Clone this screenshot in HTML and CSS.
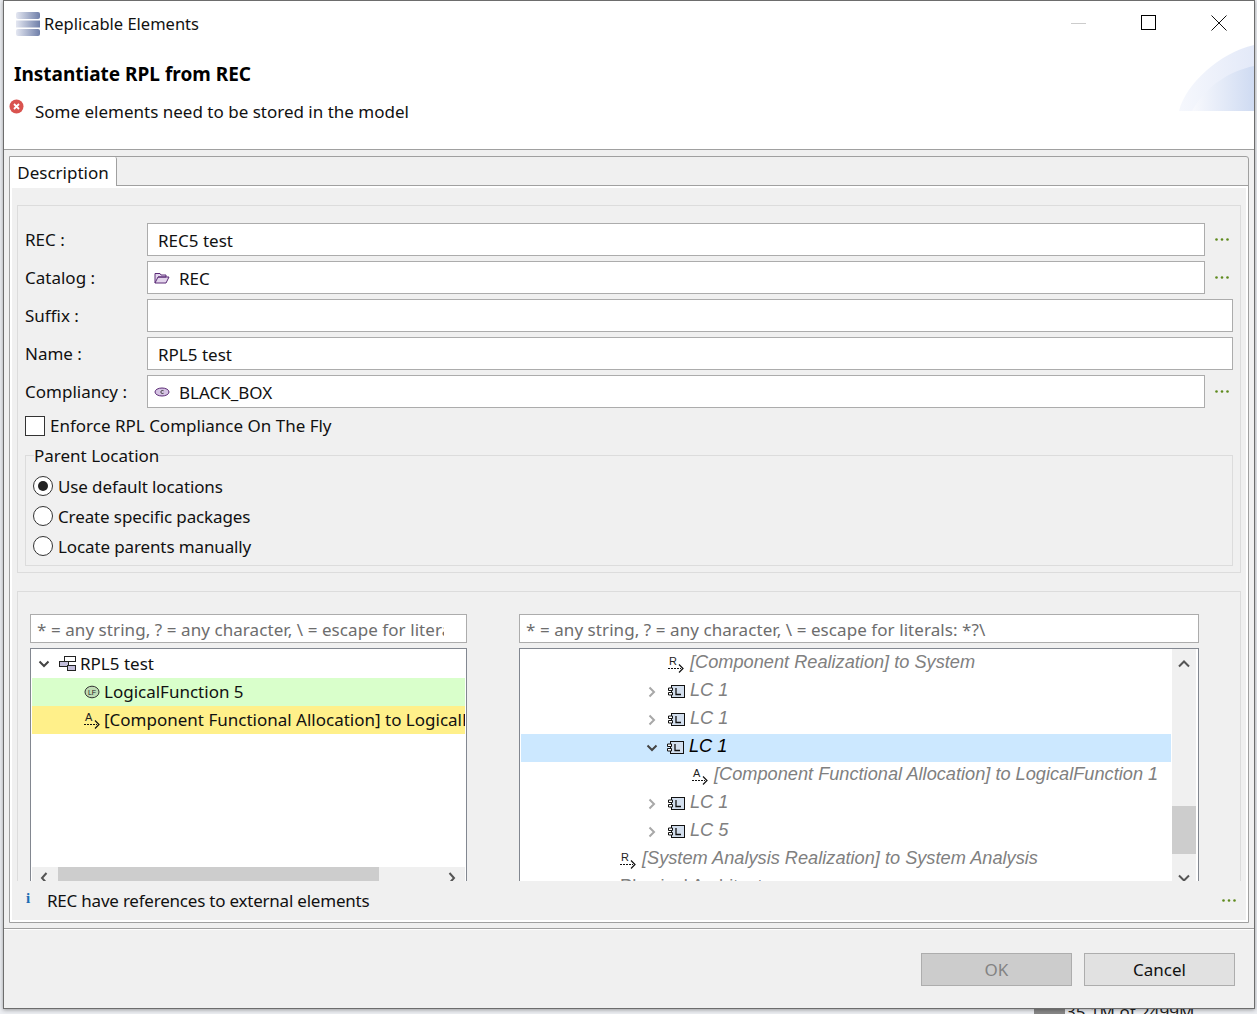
FILE: index.html
```html
<!DOCTYPE html>
<html lang='en'>

<head>
    <meta charset='UTF-8'>
    <meta name='viewport' content='width=device-width, initial-scale=1.0'>
    <title>Replicable Elements</title>
    <link rel="stylesheet" href="styles.css">
</head>

<body>
    <svg class="defs" width="0" height="0">
        <defs>
            <linearGradient id="bar" x1="0" x2="1" y1="0" y2="0">
                <stop offset="0" stop-color="#e4e7f1" />
                <stop offset="1" stop-color="#6f7fa9" />
            </linearGradient>
            <symbol id="lc" viewBox="0 0 17 16">
                <rect x="3.500" y="1.500" width="13" height="12" fill="#d3dfee" stroke="#111" />
                <path d="M0.500 4h4v2.500h-4zM0.500 8.500h4v2.500h-4z" fill="#fff" stroke="#111" />
                <path d="M8 4v6.500h5" fill="none" stroke="#111" stroke-width="1.300" />
            </symbol>
            <symbol id="arrow" viewBox="0 0 16 17">
                <path d="M0 12.500h13" fill="none" stroke="#111" stroke-dasharray="2 1" />
                <path d="M11 8.500l4 4-4 4" fill="none" stroke="#111" stroke-width="1.200" />
            </symbol>
            <symbol id="dots3" viewBox="0 0 14 3">
                <circle cx="1.500" cy="1.500" r="1.300" fill="#5e8a1d" />
                <circle cx="7" cy="1.500" r="1.300" fill="#5e8a1d" />
                <circle cx="12.500" cy="1.500" r="1.300" fill="#5e8a1d" />
            </symbol>
            <symbol id="chev-right" viewBox="0 0 10 12">
                <path d="M2.500 1.500l4.500 4.500-4.500 4.500" fill="none" stroke="#a8a8a8" stroke-width="2" />
            </symbol>
            <symbol id="chev-down" viewBox="0 0 12 10">
                <path d="M1.500 2.500l4.500 4.500 4.500-4.500" fill="none" stroke="#444" stroke-width="2" />
            </symbol>
        </defs>
    </svg>

    <div class="window">
        <div class="titlebar">
            <svg class="app-icon" width="24" height="24" viewBox="0 0 24 24">
                <rect x="0" y="0" width="24" height="7" rx="2" fill="url(#bar)" />
                <rect x="0" y="8.500" width="24" height="7" fill="url(#bar)" />
                <rect x="0" y="17" width="24" height="7" rx="2" fill="url(#bar)" />
            </svg>
            <span class="title-text">Replicable Elements</span>
            <div class="win-controls">
                <svg width="16" height="16" viewBox="0 0 16 16"><path d="M0 8.500h15" stroke="#ccc" /></svg>
                <svg width="16" height="16" viewBox="0 0 16 16"><rect x="0.500" y="0.500" width="14" height="14" fill="none" stroke="#000" /></svg>
                <svg width="16" height="16" viewBox="0 0 16 16"><path d="M0.500 0.500l15 15M15.500 0.500l-15 15" stroke="#111" /></svg>
            </div>
        </div>

        <div class="banner">
            <h1 class="banner-title">Instantiate RPL from REC</h1>
            <div class="banner-msg">
                <svg class="err-icon" width="15" height="15" viewBox="0 0 15 15">
                    <circle cx="7.500" cy="7.500" r="7" fill="#d9534f" />
                    <path d="M5 5l5 5M10 5l-5 5" stroke="#fff" stroke-width="1.800" />
                </svg>
                <span>Some elements need to be stored in the model</span>
            </div>
            <svg class="banner-art" width="75" height="66" viewBox="0 0 75 66">
                <defs>
                    <linearGradient id="art" x1="0" x2="1" y1="0" y2="0">
                        <stop offset="0" stop-color="#f8f9fd" />
                        <stop offset="1" stop-color="#cfdbf2" />
                    </linearGradient>
                    <linearGradient id="art2" x1="0" x2="1" y1="0" y2="0">
                        <stop offset="0" stop-color="#f6f8fd" />
                        <stop offset="1" stop-color="#e3e9f8" />
                    </linearGradient>
                </defs>
                <path d="M0 66C6 40 40 8 75 0V66z" fill="url(#art2)" />
                <path d="M13 66C26 42 50 26 75 21V66z" fill="url(#art)" />
            </svg>
        </div>

        <div class="content">
            <div class="folder">
                <div class="tabbar">
                    <div class="tab">Description</div>
                </div>
                <div class="tab-body">
                    <div class="section form">
                        <div class="row">
                            <label class="lbl">REC :</label>
                            <div class="field">REC5 test</div>
                            <div class="dots"><svg width="14" height="3"><use href="#dots3" /></svg></div>
                        </div>
                        <div class="row">
                            <label class="lbl">Catalog :</label>
                            <div class="field">
                                <svg class="field-icon" width="16" height="14" viewBox="0 0 16 14">
                                    <path d="M1 12V2.500h5l1 1.500h5v2H4L1 12h11l3-6H4" fill="#e3d5ec" stroke="#5b2b76" />
                                </svg>
                                REC
                            </div>
                            <div class="dots"><svg width="14" height="3"><use href="#dots3" /></svg></div>
                        </div>
                        <div class="row">
                            <label class="lbl">Suffix :</label>
                            <div class="field"></div>
                        </div>
                        <div class="row">
                            <label class="lbl">Name :</label>
                            <div class="field">RPL5 test</div>
                        </div>
                        <div class="row">
                            <label class="lbl">Compliancy :</label>
                            <div class="field">
                                <svg class="field-icon" width="16" height="14" viewBox="0 0 16 14">
                                    <ellipse cx="8" cy="7" rx="7" ry="4" fill="#d5c3e3" stroke="#5b2b76" />
                                    <path d="M9.500 5.700a1.800 1.500 0 1 0 0 2.600" fill="none" stroke="#333" />
                                </svg>
                                BLACK_BOX
                            </div>
                            <div class="dots"><svg width="14" height="3"><use href="#dots3" /></svg></div>
                        </div>
                        <div class="check-row">
                            <span class="checkbox"></span>
                            <span class="check-text">Enforce RPL Compliance On The Fly</span>
                        </div>
                        <fieldset class="group">
                            <legend>Parent Location</legend>
                            <div class="radio-row"><span class="radio on"></span>Use default locations</div>
                            <div class="radio-row"><span class="radio"></span>Create specific packages</div>
                            <div class="radio-row"><span class="radio"></span>Locate parents manually</div>
                        </fieldset>
                    </div>

                    <div class="section trees">
                        <div class="pane pane-left">
                            <div class="filter"><span class="filter-clip">* = any string, ? = any character, \ = escape for literals: *?\</span></div>
                            <div class="tree">
                                <div class="tree-row">
                                    <svg class="twist" width="12" height="10"><use href="#chev-down" /></svg>
                                    <svg class="ico" width="17" height="16" viewBox="0 0 17 16">
                                        <rect x="5.500" y="0.500" width="11" height="5" fill="#fff" stroke="#222" />
                                        <rect x="0.500" y="5.500" width="9" height="5" fill="#c3bedb" stroke="#222" />
                                        <rect x="8.500" y="9.500" width="8" height="5" fill="#c3bedb" stroke="#222" />
                                    </svg>
                                    <span>RPL5 test</span>
                                </div>
                                <div class="tree-row added">
                                    <svg class="ico" width="16" height="14" viewBox="0 0 16 14">
                                        <ellipse cx="8" cy="7" rx="7" ry="5.800" fill="#bfdcb4" stroke="#333" />
                                        <text x="8" y="9.500" class="ico-txt">LF</text>
                                    </svg>
                                    <span>LogicalFunction 5</span>
                                </div>
                                <div class="tree-row changed">
                                    <svg class="ico" width="16" height="17" viewBox="0 0 16 17">
                                        <text x="1" y="9" class="ico-txt big">A</text>
                                        <use href="#arrow" />
                                    </svg>
                                    <span>[Component Functional Allocation] to LogicalFunction 5</span>
                                </div>
                            </div>
                            <div class="hscroll">
                                <svg class="h-left" width="10" height="14" viewBox="0 0 10 14"><path d="M7.500 6l-4.500 5 4.500 5" fill="none" stroke="#555" stroke-width="2" /></svg>
                                <div class="thumb-h"></div>
                                <svg class="h-right" width="10" height="14" viewBox="0 0 10 14"><path d="M2.500 6l4.500 5-4.500 5" fill="none" stroke="#555" stroke-width="2" /></svg>
                            </div>
                        </div>

                        <div class="pane pane-right">
                            <div class="filter">* = any string, ? = any character, \ = escape for literals: *?\</div>
                            <div class="tree tree-it">
                                <div class="rows">
                                    <div class="item lv3">
                                        <svg class="ico" width="16" height="17" viewBox="0 0 16 17"><text x="1" y="9" class="ico-txt big">R</text><use href="#arrow" /></svg>
                                        <span>[Component Realization] to System</span>
                                    </div>
                                    <div class="item lv2">
                                        <svg class="twist" width="10" height="12"><use href="#chev-right" /></svg>
                                        <svg class="ico lc" width="17" height="16"><use href="#lc" /></svg>
                                        <span>LC 1</span>
                                    </div>
                                    <div class="item lv2">
                                        <svg class="twist" width="10" height="12"><use href="#chev-right" /></svg>
                                        <svg class="ico lc" width="17" height="16"><use href="#lc" /></svg>
                                        <span>LC 1</span>
                                    </div>
                                    <div class="item lv2 selected">
                                        <svg class="twist" width="12" height="10"><use href="#chev-down" /></svg>
                                        <svg class="ico lc" width="17" height="16"><use href="#lc" /></svg>
                                        <span>LC 1</span>
                                    </div>
                                    <div class="item lv4">
                                        <svg class="ico" width="16" height="17" viewBox="0 0 16 17"><text x="1" y="9" class="ico-txt big">A</text><use href="#arrow" /></svg>
                                        <span>[Component Functional Allocation] to LogicalFunction 1</span>
                                    </div>
                                    <div class="item lv2">
                                        <svg class="twist" width="10" height="12"><use href="#chev-right" /></svg>
                                        <svg class="ico lc" width="17" height="16"><use href="#lc" /></svg>
                                        <span>LC 1</span>
                                    </div>
                                    <div class="item lv2">
                                        <svg class="twist" width="10" height="12"><use href="#chev-right" /></svg>
                                        <svg class="ico lc" width="17" height="16"><use href="#lc" /></svg>
                                        <span>LC 5</span>
                                    </div>
                                    <div class="item lv1">
                                        <svg class="ico" width="16" height="17" viewBox="0 0 16 17"><text x="1" y="9" class="ico-txt big">R</text><use href="#arrow" /></svg>
                                        <span>[System Analysis Realization] to System Analysis</span>
                                    </div>
                                    <div class="item lv1 plain">
                                        <span>Physical Architecture</span>
                                    </div>
                                </div>
                                <div class="vscroll">
                                    <svg class="v-up" width="14" height="10" viewBox="0 0 14 10"><path d="M2 7.500l5-5 5 5" fill="none" stroke="#555" stroke-width="2" /></svg>
                                    <div class="thumb-v"></div>
                                    <svg class="v-down" width="14" height="10" viewBox="0 0 14 10"><path d="M2 2.500l5 5 5-5" fill="none" stroke="#555" stroke-width="2" /></svg>
                                </div>
                            </div>
                        </div>
                    </div>

                    <div class="status">
                        <span class="info">i</span>
                        <span class="status-text">REC have references to external elements</span>
                        <svg class="status-dots" width="14" height="3"><use href="#dots3" /></svg>
                    </div>
                </div>
            </div>
        </div>

        <div class="footer">
            <button class="btn btn-off">OK</button>
            <button class="btn">Cancel</button>
        </div>
    </div>

    <div class="taskstrip">
        <div class="mem-block"></div>
        <span class="mem">35 1M of 2499M</span>
    </div>
</body>

</html>
```

FILE: styles.css
```css
:root {
    --bg: #f0f0f0;
    --line: #a0a0a0;
    --light-line: #dcdcdc;
    --field-line: #acacac;
}

html,
body {
    padding: 0;
    margin: 0;
}

body {
    height: 1014px;
    overflow: hidden;
    background: #eceef2;
    font-family: "Noto Sans", "Open Sans", sans-serif;
    font-size: 17px;
    color: #111;
}

.defs {
    position: absolute;
}

.window {
    position: relative;
    z-index: 1;
    margin-left: 3px;
    width: 1252px;
    height: 1009px;
    box-sizing: border-box;
    border: 1px solid #6d6d6d;
    background: var(--bg);
    box-shadow: 0 1px 4px rgba(0, 0, 0, 0.35);
    display: flex;
    flex-direction: column;
}

.titlebar {
    height: 44px;
    background: #fff;
    display: flex;
    align-items: center;
    padding-left: 12px;
    flex: none;
}

.app-icon {
    margin-top: 1px;
    flex: none;
}

.title-text {
    margin-left: 4px;
    font-size: 16.500px;
}

.win-controls {
    margin-left: auto;
    display: flex;
    gap: 54px;
    padding-right: 27px;
}

.banner {
    position: relative;
    height: 104px;
    background: #fff;
    flex: none;
    border-bottom: 1px solid var(--line);
}

.banner-title {
    margin: 0;
    padding: 16px 0 0 10px;
    font-size: 19px;
    font-weight: 700;
    line-height: 26px;
    color: #000;
}

.banner-msg {
    display: flex;
    padding: 13px 0 0 5px;
    line-height: 24px;
}

.err-icon {
    flex: none;
    margin: -1px 11px 0 0;
}

.banner-art {
    position: absolute;
    right: 0;
    top: 0;
}

.content {
    padding: 6px 5px 0;
    flex: none;
}

.folder {
    height: 767px;
    box-sizing: border-box;
    border: 1px solid var(--line);
    border-top-right-radius: 3px;
    display: flex;
    flex-direction: column;
}

.tabbar {
    height: 28px;
    flex: none;
    display: flex;
    border-bottom: 1px solid var(--line);
}

.tab {
    width: 107px;
    box-sizing: border-box;
    height: 29px;
    background: #fff;
    border-right: 1px solid var(--line);
    border-top-right-radius: 2px;
    text-align: center;
    line-height: 32px;
}

.tab-body {
    flex: 1;
    border: 2px solid #fff;
    padding: 17px 5px 0;
    min-height: 0;
    display: flex;
    flex-direction: column;
}

.section {
    border: 1px solid var(--light-line);
    flex: none;
}

.form {
    height: 368px;
    box-sizing: border-box;
    padding: 17px 7px 0;
    margin-bottom: 18px;
}

.row {
    display: flex;
    align-items: center;
    height: 33px;
    margin-bottom: 5px;
}

.lbl {
    width: 122px;
    flex: none;
}

.field {
    flex: 1;
    height: 33px;
    box-sizing: border-box;
    border: 1px solid var(--field-line);
    background: #fff;
    padding: 2px 0 0 10px;
    display: flex;
    align-items: center;
}

.field-icon {
    margin: -2px 9px 0 -4px;
}

.dots {
    width: 28px;
    flex: none;
    display: flex;
    padding-left: 10px;
    box-sizing: border-box;
}

.check-row {
    display: flex;
    align-items: center;
    height: 20px;
    margin-top: 8px;
    gap: 5px;
}

.check-text {
    margin-bottom: 2px;
}

.checkbox {
    width: 20px;
    height: 20px;
    box-sizing: border-box;
    border: 1px solid #333;
    background: #fff;
}

.group {
    margin: 6px 0 0;
    padding: 3px 0 0 7px;
    height: 124px;
    box-sizing: border-box;
    border: 1px solid var(--light-line);
}

.group legend {
    padding: 2px 0 0;
    margin-left: 1px;
    line-height: 24px;
}

.radio-row {
    display: flex;
    align-items: center;
    height: 30px;
    gap: 5px;
    letter-spacing: -0.120px;
}

.radio {
    width: 20px;
    height: 20px;
    box-sizing: border-box;
    border: 1px solid #333;
    border-radius: 50%;
    background: #fff;
    display: flex;
    align-items: center;
    justify-content: center;
}

.radio.on::after {
    content: "";
    width: 10px;
    height: 10px;
    border-radius: 50%;
    background: #222;
}

.trees {
    flex: 1;
    min-height: 0;
    border-bottom: none;
    padding: 22px 0 0 12px;
    display: flex;
    gap: 52px;
    overflow: hidden;
}

.pane {
    display: flex;
    flex-direction: column;
    gap: 5px;
}

.pane-left {
    width: 437px;
    position: relative;
}

.pane-right {
    width: 680px;
}

.filter {
    height: 29px;
    flex: none;
    box-sizing: border-box;
    border: 1px solid var(--field-line);
    background: #fff;
    padding-left: 6px;
    line-height: 30px;
    color: #6d6d6d;
    letter-spacing: 0.070px;
    white-space: nowrap;
    overflow: hidden;
}

.filter-clip {
    display: block;
    width: 407px;
    overflow: hidden;
}

.tree {
    position: relative;
    flex: 1;
    min-height: 0;
    box-sizing: border-box;
    border: 1px solid #828790;
    border-bottom: none;
    background: #fff;
    overflow: hidden;
    padding: 1px;
}

.tree-row {
    height: 28px;
    display: flex;
    align-items: center;
    white-space: nowrap;
    overflow: hidden;
    padding-left: 52px;
}

.tree-row span {
    margin-bottom: 2px;
}

.tree-row .ico {
    flex: none;
    margin-right: 4px;
}

.tree-row:first-child {
    padding-left: 6px;
}

.tree-row:first-child .twist {
    margin-right: 9px;
}

.tree-row:first-child .ico {
    margin-right: 4px;
}

.added {
    background: #d9ffcb;
}

.changed {
    background: #fff08a;
}

.ico-txt {
    font-family: "Liberation Sans", sans-serif;
    font-size: 7px;
    font-style: normal;
    text-anchor: middle;
    fill: #222;
}

.ico-txt.big {
    font-size: 11px;
    text-anchor: start;
}

.hscroll {
    position: absolute;
    left: 2px;
    right: 2px;
    top: 253px;
    height: 14px;
    background: #f0f0f0;
}

.thumb-h {
    margin-left: 26px;
    width: 321px;
    height: 14px;
    background: #cdcdcd;
}

.h-left {
    position: absolute;
    left: 7px;
    top: 0;
}

.h-right {
    position: absolute;
    right: 8px;
    top: 0;
}

.tree-it {
    display: flex;
    padding: 0 1px;
}

.rows {
    width: 650px;
    flex: none;
    padding-top: 1px;
}

.item {
    height: 28px;
    display: flex;
    align-items: center;
    white-space: nowrap;
    font-family: "Liberation Sans", sans-serif;
    font-size: 18.200px;
    font-style: italic;
    color: #808080;
}

.item span {
    margin-bottom: 4px;
}

.item .ico {
    flex: none;
    margin-right: 6px;
}

.item .ico.lc {
    margin-right: 5px;
}

.lv1 {
    padding-left: 99px;
}

.lv2 {
    padding-left: 126px;
}

.lv3 {
    padding-left: 147px;
}

.lv4 {
    padding-left: 171px;
}

.item .twist {
    margin-right: 11px;
}

.item.selected {
    background: #cce8ff;
    color: #000;
}

.item.selected .twist {
    margin-right: 9px;
    margin-left: -1px;
}

.plain {
    font-style: normal;
}

.vscroll {
    position: relative;
    width: 24px;
    margin-left: 1px;
    background: #f0f0f0;
    flex: none;
}

.v-up {
    position: absolute;
    left: 5px;
    top: 10px;
}

.v-down {
    position: absolute;
    left: 5px;
    top: 224px;
}

.thumb-v {
    position: absolute;
    left: 0;
    top: 157px;
    width: 24px;
    height: 48px;
    background: #cdcdcd;
}

.status {
    height: 39px;
    margin: 0 -5px;
    display: flex;
    align-items: center;
    flex: none;
    padding: 0 10px 0 14px;
}

.info {
    width: 19px;
    font-family: "Liberation Serif", serif;
    font-weight: 700;
    font-size: 15px;
    color: #1c6db3;
    margin-top: -4px;
}

.status-text {
    margin-left: 2px;
    letter-spacing: -0.220px;
}

.status-dots {
    margin-left: auto;
}

.footer {
    flex: 1;
    margin-top: 5px;
    border-top: 1px solid var(--line);
    box-shadow: inset 0 1px 0 #fff;
    display: flex;
    justify-content: flex-end;
    gap: 12px;
    padding: 24px 19px 0 0;
    align-items: flex-start;
}

.btn {
    width: 151px;
    height: 33px;
    box-sizing: border-box;
    border: 1px solid #adadad;
    background: #e1e1e1;
    font-family: inherit;
    font-size: 17px;
    color: #111;
    padding: 0;
}

.btn-off {
    background: #ccc;
    color: #838383;
}

.taskstrip {
    height: 5px;
    position: relative;
    overflow: hidden;
}

.mem-block {
    position: absolute;
    left: 1034px;
    top: 0;
    width: 31px;
    height: 5px;
    background: #888;
}

.mem {
    position: absolute;
    left: 1066px;
    top: -7px;
    line-height: 20px;
    color: #222;
}
```
